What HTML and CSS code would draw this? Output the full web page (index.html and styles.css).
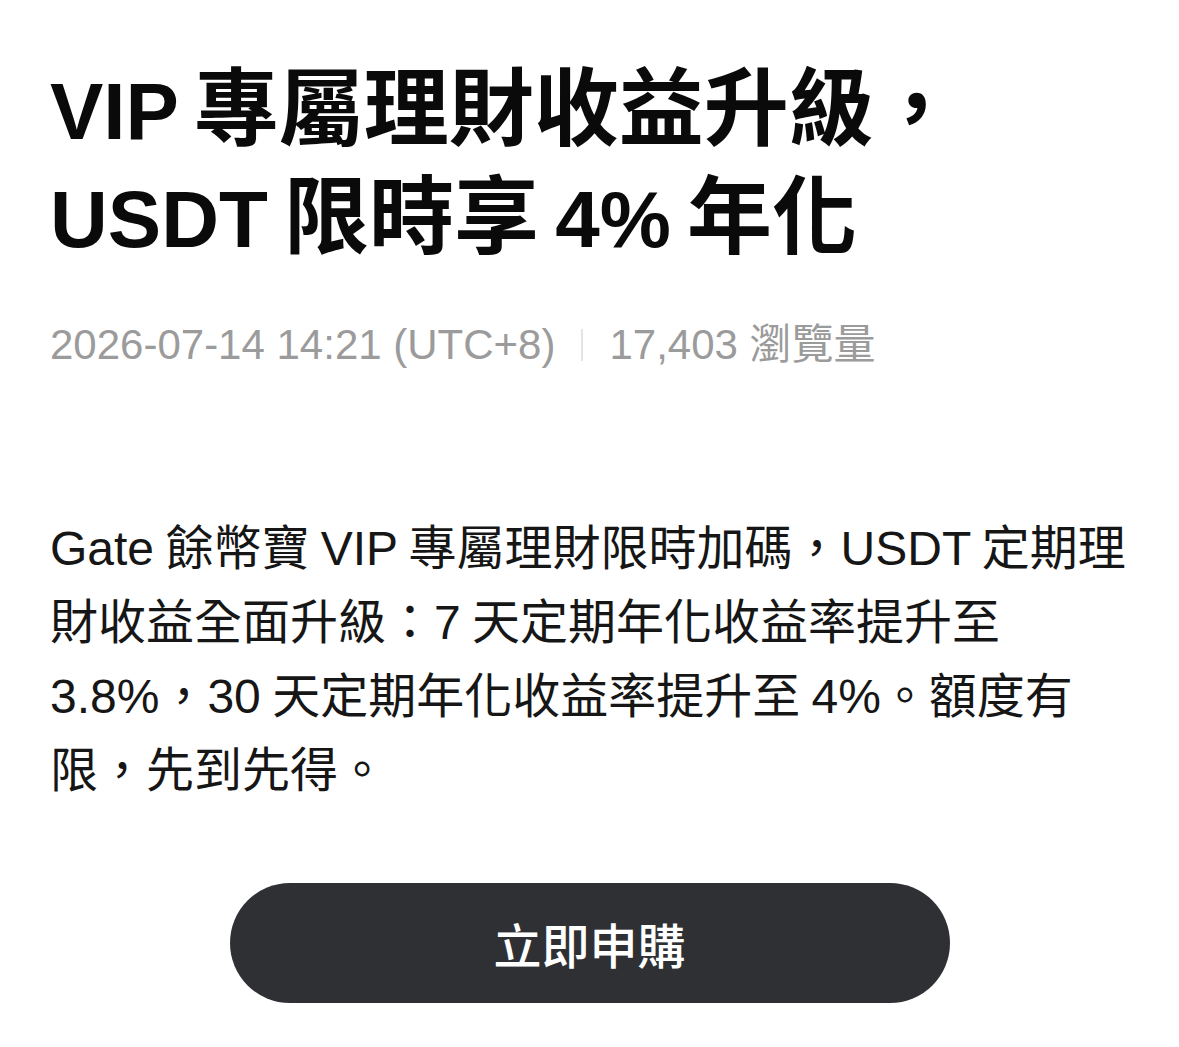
FILE: index.html
```
<!DOCTYPE html>
<html lang="zh-Hant">

<head>
    <meta charset="UTF-8">
    <meta name="viewport" content="width=device-width, initial-scale=1.0">
    <title>VIP 專屬理財</title>
    <link rel="stylesheet" href="styles.css">
</head>

<body>
    <div class="article">
        <h1 class="title">VIP <span class="han">專屬理財收益升級，</span><br>USDT <span class="han">限時享</span> 4% <span class="han">年化</span></h1>

        <div class="meta">
            <span>2026-07-14 14:21 (UTC+8)</span>
            <span class="divider"></span>
            <span>17,403 瀏覽量</span>
        </div>

        <p class="content">Gate 餘幣寶 VIP 專屬理財限時加碼，USDT 定期理財收益全面升級：7 天定期年化收益率提升至 3.8%，30 天定期年化收益率提升至 4%。額度有限，先到先得。</p>

        <div class="actions">
            <button class="btn-buy">立即申購</button>
        </div>
    </div>
</body>

</html>
```

FILE: styles.css
```
* {
    box-sizing: border-box;
    margin: 0;
    padding: 0;
}

body {
    background: #fff;
    font-family: "Liberation Sans", "Noto Sans CJK TC", sans-serif;
    color: #111;
}

.article {
    padding: 58px 40px 0 50px;
}

.title {
    font-size: 80px;
    line-height: 108px;
    font-weight: 700;
    color: #0a0a0a;
    word-spacing: -6px;
}

/* han glyphs run a little larger than the latin ones */
.title .han {
    font-size: 85px;
    line-height: 1;
}

.meta {
    display: flex;
    align-items: center;
    margin-top: 46px;
    font-size: 42px;
    line-height: 50px;
    color: #9b9b9b;
}

.meta .divider {
    width: 2px;
    height: 32px;
    background: #e4e4e4;
    margin: 0 26px;
}

.content {
    margin-top: 142px;
    font-size: 48px;
    line-height: 74px;
    color: #161616;
    word-spacing: -2px;
}

.actions {
    display: flex;
    justify-content: center;
    margin: 75px -40px 0 -50px;
}

.btn-buy {
    width: 720px;
    height: 120px;
    border: none;
    outline: none;
    border-radius: 60px;
    background: #2f3034;
    color: #fff;
    font-family: "Noto Sans CJK TC", sans-serif;
    font-size: 48px;
    font-weight: 500;
    cursor: pointer;
}
```
